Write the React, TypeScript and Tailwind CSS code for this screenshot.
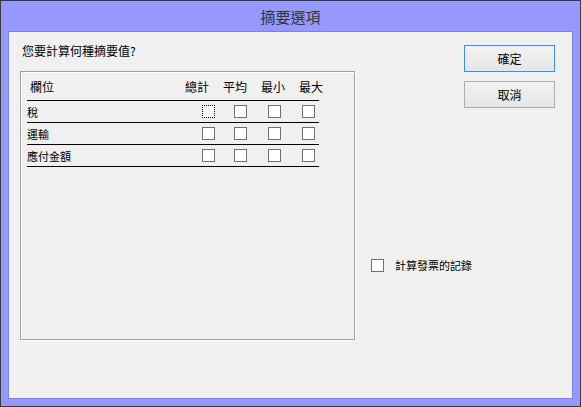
const fields = ["稅", "運輸", "應付金額"];
const totals = ["總計", "平均", "最小", "最大"];

const font = { fontFamily: '"Noto Sans CJK TC", "Noto Sans", sans-serif' };

function Box({ focused = false, className = "" }: { focused?: boolean; className?: string }) {
  return (
    <span
      className={
        "block w-[13px] h-[13px] shrink-0 bg-white border " +
        (focused ? "border-dotted border-black " : "border-[#707070] ") +
        className
      }
    />
  );
}

function DialogButton({ label, primary = false }: { label: string; primary?: boolean }) {
  return (
    <button
      className={
        "w-[91px] h-[27px] text-[12px] leading-none text-black bg-gradient-to-b from-[#f2f2f2] to-[#e5e5e5] border " +
        (primary ? "border-[#3c8ee8]" : "border-[#adadad]")
      }
    >
      {label}
    </button>
  );
}

export default function App() {
  return (
    <div
      className="w-[581px] h-[407px] flex flex-col border border-[#3a3a3a] bg-[#9699fb] text-black"
      style={font}
    >
      <div className="h-[30px] shrink-0 flex items-center justify-center text-[15px] text-[#333] pt-[2px]">
        摘要選項
      </div>

      <div className="mx-[7px] mb-[7px] flex-1 flex border border-[#7d82e2] bg-[#f0f0f0]">
        {/* left side: question and field table */}
        <div className="w-[347px] shrink-0 pl-[11px] pt-[11px]">
          <div className="ml-[2px] h-[16px] text-[12px] leading-[16px]">您要計算何種摘要值?</div>

          <div className="mt-[12px] w-[335px] h-[269px] border border-[#a0a0a0] shadow-[1px_1px_0_#fff,inset_1px_1px_0_#fff] pl-[6px]">
            <div className="w-[292px]">
              {/* header row runs a little past the rules, like the original dialog */}
              <div className="flex pt-[7px] pb-[5px] text-[12px] leading-[16px] border-b border-black whitespace-nowrap">
                <span className="w-[158px] shrink-0 pl-[3px]">欄位</span>
                <div className="flex shrink-0 gap-[14px]">
                  {totals.map((t) => (
                    <span key={t}>{t}</span>
                  ))}
                </div>
              </div>
              {fields.map((f, i) => (
                <div key={f} className="h-[22px] flex items-center border-b border-black">
                  <span className="w-[175px] shrink-0 text-[11px] leading-[16px]">{f}</span>
                  <Box focused={i === 0} />
                  <Box className="ml-[19px]" />
                  <Box className="ml-[21px]" />
                  <Box className="ml-[21px]" />
                </div>
              ))}
            </div>
          </div>
        </div>

        {/* right side: buttons and option */}
        <div className="flex-1 flex flex-col">
          <div className="flex flex-col items-end gap-[9px] pt-[13px] pr-[17px]">
            <DialogButton label="確定" primary />
            <DialogButton label="取消" />
          </div>
          <label className="mt-[149px] pl-[15px] h-[16px] flex items-center gap-[11px] text-[11px]">
            <Box />
            <span className="leading-[16px]">計算發票的記錄</span>
          </label>
        </div>
      </div>
    </div>
  );
}
